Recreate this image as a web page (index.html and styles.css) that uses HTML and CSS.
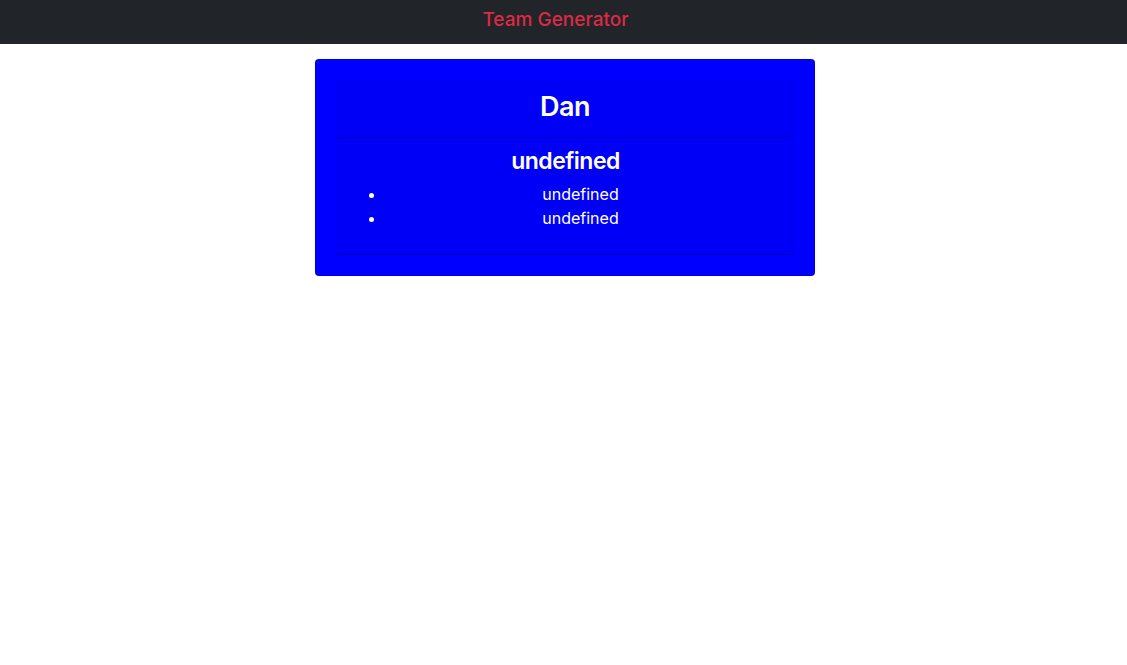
FILE: index.html
```html
<!DOCTYPE html>
<html lang="en">
<head>
<meta charset="utf-8">
<title>Team Generator</title>
<link rel="stylesheet" href="styles.css">
</head>
<body>
<nav class="navbar">
  <span class="brand">Team Generator</span>
</nav>
<main class="container">
  <div class="card outer">
    <div class="card inner">
      <div class="card-header">
        <h3 class="name">Dan</h3>
      </div>
      <div class="card-body">
        <h4 class="role">undefined</h4>
        <ul class="details">
          <li>undefined</li>
          <li>undefined</li>
        </ul>
      </div>
    </div>
  </div>
</main>
</body>
</html>
```
FILE: styles.css
```css
* { box-sizing: border-box; }
html, body {
  margin: 0;
  padding: 0;
  background: #fff;
  font-family: Inter, "Noto Sans", "Liberation Sans", sans-serif;
  font-size: 16px;
  line-height: 1.5;
  color: #212529;
}
.navbar {
  height: 44px;
  background: #212529;
  display: flex;
  align-items: center;
  justify-content: center;
}
.brand {
  color: #dc2a44;
  font-size: 19px;
  font-weight: 500;
  line-height: 1.5;
  margin-right: 16px;
  padding-bottom: 4px;
}
.container {
  display: flex;
  justify-content: center;
  padding-top: 15px;
  padding-left: 3px;
}
.card {
  border-radius: 4px;
}
.outer {
  width: 500px;
  background: #0000ff;
  border: 1px solid rgba(0,0,0,.125);
  padding: 20px;
  color: #fff;
}
.inner {
  background: rgba(0,0,0,.03);
  border-radius: 0;
  border-bottom: 1px solid rgba(0,0,0,.2);
}
.card-header {
  padding: 10px 20px 6px;
  border-bottom: 1px solid rgba(0,0,0,.2);
  text-align: center;
}
.name {
  margin: 0 0 7px;
  font-size: 27px;
  font-weight: 600;
  letter-spacing: -0.5px;
  line-height: 33.6px;
}
.card-body {
  padding: 9px 19px 8px 10px;
  text-align: center;
}
.role {
  margin: 0 0 7px 10px;
  font-size: 23px;
  font-weight: 600;
  letter-spacing: -0.5px;
  line-height: 28.8px;
}
.details {
  margin: 0 0 16px;
  padding-left: 40px;
  font-size: 16px;
  line-height: 24px;
}
```
